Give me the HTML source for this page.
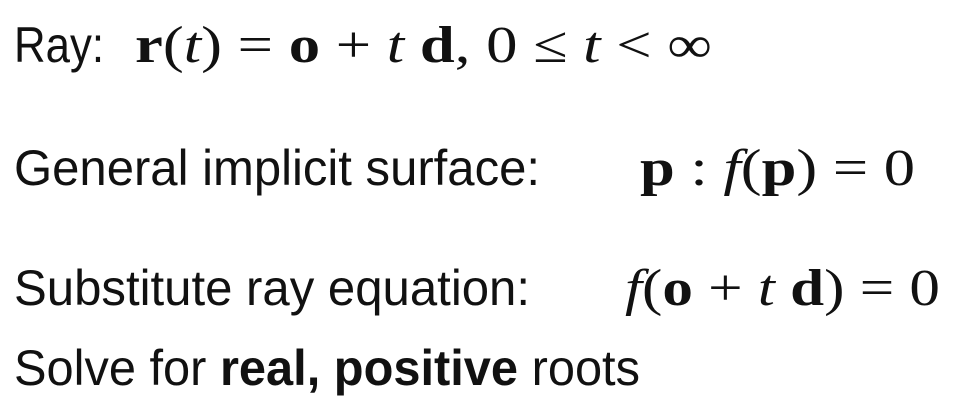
<!DOCTYPE html>
<html><head><meta charset="utf-8"><style>
html,body{margin:0;padding:0;background:#fff;width:960px;height:416px;overflow:hidden}
.s{font-family:"Liberation Sans",sans-serif;font-size:50px;fill:#111}
.m{font-family:"Liberation Serif",serif;font-size:52px;fill:#111}
.b{font-weight:bold;font-style:normal}
.i{font-style:italic}
</style></head><body>
<svg width="960" height="416" xmlns="http://www.w3.org/2000/svg">
<text class="s" x="14" y="62" textLength="90" lengthAdjust="spacingAndGlyphs">Ray:</text>
<text class="m" x="135" y="62" textLength="577" lengthAdjust="spacingAndGlyphs"><tspan class="b">r</tspan>(<tspan class="i">t</tspan>) = <tspan class="b">o</tspan> + <tspan class="i">t</tspan> <tspan class="b">d</tspan>,  0 ≤ <tspan class="i">t</tspan> &lt; ∞</text>

<text class="s" x="14" y="185" textLength="526" lengthAdjust="spacingAndGlyphs">General implicit surface:</text>
<text class="m" x="640" y="185" textLength="275" lengthAdjust="spacingAndGlyphs"><tspan class="b">p</tspan> : <tspan class="i">f</tspan>(<tspan class="b">p</tspan>) = 0</text>

<text class="s" x="14" y="305" textLength="516" lengthAdjust="spacingAndGlyphs">Substitute ray equation:</text>
<text class="m" x="625" y="305" textLength="315" lengthAdjust="spacingAndGlyphs"><tspan class="i">f</tspan>(<tspan class="b">o</tspan> + <tspan class="i">t</tspan> <tspan class="b">d</tspan>) = 0</text>

<text class="s" x="14" y="385" textLength="626" lengthAdjust="spacingAndGlyphs">Solve for <tspan font-weight="bold">real, positive</tspan> roots</text>
</svg>
</body></html>
